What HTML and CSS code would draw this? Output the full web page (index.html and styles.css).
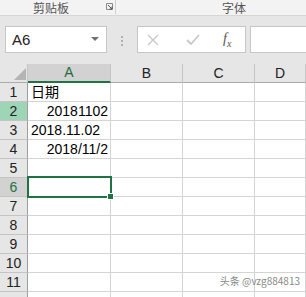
FILE: index.html
```html
<!DOCTYPE html>
<html lang="zh-CN">
<head>
  <meta charset="UTF-8">
  <title>Excel 日期</title>
  <link rel="stylesheet" href="styles.css">
</head>
<body>
  <div class="ribbon">
    <div class="group clip">
      <span>剪贴板</span>
      <svg class="launcher" width="8" height="8" viewBox="0 0 8 8">
        <path d="M0.5 0.5h6v6h-6z" fill="none" stroke="#8a8a8a"/>
        <path d="M2 2l4 4M3.5 6h2.5v-2.5" fill="none" stroke="#555"/>
      </svg>
    </div>
    <div class="group font"><span>字体</span></div>
  </div>

  <div class="toolbar">
    <div class="namebox">
      <span>A6</span>
      <svg width="8" height="5" viewBox="0 0 8 5"><path d="M0 0h8L4 4z" fill="#707070"/></svg>
    </div>
    <div class="grip"><i></i><i></i><i></i></div>
    <div class="fbuttons">
      <svg class="cancel" width="12" height="12" viewBox="0 0 12 12"><path d="M1 1l10 10M11 1L1 11" stroke="#c8c8c8" stroke-width="1.4"/></svg>
      <svg class="enter" width="14" height="12" viewBox="0 0 14 12"><path d="M1 6l4 4 8-9" fill="none" stroke="#c8c8c8" stroke-width="1.8"/></svg>
      <span class="fx">f<sub>x</sub></span>
    </div>
    <div class="finput"></div>
  </div>

  <div class="sheet">
    <div class="corner"><svg width="12" height="12" viewBox="0 0 12 12"><path d="M12 0v12H0z" fill="#b4b4b4"/></svg></div>
    <div class="colhead active">A</div>
    <div class="colhead">B</div>
    <div class="colhead">C</div>
    <div class="colhead">D</div>

    <div class="rowhead">1</div><div class="cell">日期</div><div class="cell"></div><div class="cell"></div><div class="cell"></div>
    <div class="rowhead green">2</div><div class="cell num">20181102</div><div class="cell"></div><div class="cell"></div><div class="cell"></div>
    <div class="rowhead">3</div><div class="cell">2018.11.02</div><div class="cell"></div><div class="cell"></div><div class="cell"></div>
    <div class="rowhead">4</div><div class="cell num">2018/11/2</div><div class="cell"></div><div class="cell"></div><div class="cell"></div>
    <div class="rowhead">5</div><div class="cell"></div><div class="cell"></div><div class="cell"></div><div class="cell"></div>
    <div class="rowhead active">6</div><div class="cell selected"><span class="handle"></span></div><div class="cell"></div><div class="cell"></div><div class="cell"></div>
    <div class="rowhead">7</div><div class="cell"></div><div class="cell"></div><div class="cell"></div><div class="cell"></div>
    <div class="rowhead">8</div><div class="cell"></div><div class="cell"></div><div class="cell"></div><div class="cell"></div>
    <div class="rowhead">9</div><div class="cell"></div><div class="cell"></div><div class="cell"></div><div class="cell"></div>
    <div class="rowhead">10</div><div class="cell"></div><div class="cell"></div><div class="cell"></div><div class="cell"></div>
    <div class="rowhead">11</div><div class="cell"></div><div class="cell"></div><div class="cell"></div><div class="cell"></div>
    <div class="rowhead"></div><div class="cell"></div><div class="cell"></div><div class="cell"></div><div class="cell"></div>
  </div>

  <div class="watermark">头条 @vzg884813</div>
</body>
</html>
```

FILE: styles.css
```css
body {
  margin: 0;
  width: 306px;
  height: 297px;
  overflow: hidden;
  position: relative;
  font-family: "Liberation Sans", "Noto Sans CJK SC", sans-serif;
  background: #e6e6e6;
  color: #000;
}
.ribbon {
  display: flex;
  height: 15px;
  background: #f3f3f3;
  border-bottom: 1px solid #d6d6d6;
  font-size: 12px;
  color: #555;
}
.group {
  display: flex;
  align-items: center;
  height: 14px;
}
.clip {
  width: 116px;
  box-sizing: border-box;
  padding-left: 33px;
  border-right: 1px solid #d0d0d0;
}
.launcher {
  margin-left: 37px;
}
.font {
  padding-left: 106px;
}
.toolbar {
  display: flex;
  align-items: flex-start;
  height: 38px;
  padding-top: 10px;
}
.namebox {
  display: flex;
  align-items: center;
  justify-content: space-between;
  margin-left: 5px;
  padding: 0 7px 0 6px;
  box-sizing: border-box;
  width: 102px;
  height: 27px;
  background: #fff;
  border: 1px solid #c6c6c6;
  font-size: 15px;
  color: #222;
}
.grip {
  display: flex;
  flex-direction: column;
  gap: 2px;
  width: 30px;
  padding-top: 10px;
  align-items: center;
}
.grip i {
  width: 2px;
  height: 2px;
  background: #b0b0b0;
}
.fbuttons {
  display: flex;
  align-items: center;
  width: 109px;
  height: 27px;
  box-sizing: border-box;
  padding-left: 9px;
  background: #fff;
  border: 1px solid #c6c6c6;
}
.enter {
  margin-left: 27px;
}
.fx {
  margin-left: 23px;
  font-family: "Liberation Serif", serif;
  font-style: italic;
  font-size: 14px;
  color: #555;
}
.fx sub {
  font-size: 10px;
}
.finput {
  flex: 1;
  height: 27px;
  margin-left: 4px;
  box-sizing: border-box;
  background: #fff;
  border: 1px solid #c6c6c6;
  border-right: 0;
}
.sheet {
  display: grid;
  grid-template-columns: 28px 83px 72px 72px 1fr;
  grid-template-rows: 19px;
  grid-auto-rows: 19px;
  font-size: 14px;
}
.sheet > div {
  box-sizing: border-box;
  border-right: 1px solid #d4d4d4;
  border-bottom: 1px solid #d4d4d4;
  background: #fff;
}
.sheet > .corner {
  display: flex;
  align-items: flex-end;
  justify-content: flex-end;
  padding: 0 1px 2px 0;
  background: #e6e6e6;
  border-right-color: #c4c4c4;
  border-bottom-color: #ababab;
}
.sheet > .colhead {
  background: #e6e6e6;
  text-align: center;
  line-height: 18px;
  color: #222;
  border-right-color: #c4c4c4;
  border-bottom-color: #ababab;
}
.sheet > .colhead:last-child {
  text-align: left;
  padding-left: 30px;
}
.sheet > .colhead.active {
  background: #d2d2d2;
  color: #1e6b41;
  border-bottom: 2px solid #217346;
  line-height: 17px;
}
.sheet > .rowhead {
  background: #e6e6e6;
  text-align: center;
  line-height: 19px;
  color: #222;
  border-right-color: #9e9e9e;
  border-bottom-color: #c4c4c4;
}
.sheet > .rowhead.green {
  background: #9fd5b7;
}
.sheet > .rowhead.active {
  background: #d2d2d2;
  color: #217346;
}
.cell {
  line-height: 19px;
  padding-left: 3px;
  white-space: nowrap;
}
.cell.num {
  text-align: right;
  padding-right: 2px;
}
.cell.selected {
  position: relative;
}
.cell.selected::before {
  content: "";
  position: absolute;
  left: -1px;
  top: -2px;
  right: -2px;
  bottom: -2px;
  border: 2px solid #217346;
}
.handle {
  position: absolute;
  right: -4px;
  bottom: -4px;
  width: 5px;
  height: 5px;
  background: #217346;
  border: 1px solid #fff;
}
.watermark {
  position: absolute;
  right: 6px;
  bottom: 9px;
  font-size: 10px;
  font-family: "Noto Sans CJK SC", sans-serif;
  color: #888;
}
```
